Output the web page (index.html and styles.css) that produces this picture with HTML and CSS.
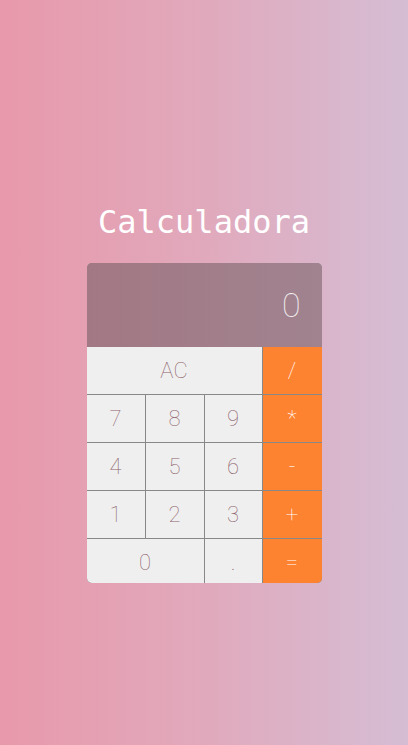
FILE: index.html
```html
<!DOCTYPE html>
<html lang="pt">
<head>
<meta charset="utf-8">
<title>Calculadora</title>
<link rel="stylesheet" href="styles.css">
</head>
<body>
<main class="page">
  <h1 class="title">Calculadora</h1>
  <div class="calc">
    <div class="display">0</div>
    <div class="keys">
      <button class="key span3">AC</button>
      <button class="key op">/</button>
      <button class="key">7</button>
      <button class="key">8</button>
      <button class="key">9</button>
      <button class="key op">*</button>
      <button class="key">4</button>
      <button class="key">5</button>
      <button class="key">6</button>
      <button class="key op">-</button>
      <button class="key">1</button>
      <button class="key">2</button>
      <button class="key">3</button>
      <button class="key op">+</button>
      <button class="key span2">0</button>
      <button class="key">.</button>
      <button class="key op">=</button>
    </div>
  </div>
</main>
</body>
</html>
```

FILE: styles.css
```css
html, body {
  margin: 0;
  padding: 0;
}
body {
  width: 408px;
  height: 745px;
  background: linear-gradient(to right, #e899ab 0%, #e1a9bc 50%, #d5bdd4 100%);
  font-family: "DejaVu Sans Mono", "Liberation Mono", monospace;
  overflow: hidden;
}
.page {
  display: flex;
  flex-direction: column;
  align-items: center;
  padding-top: 202px;
}
.title {
  margin: 0 0 21px;
  font-size: 32px;
  line-height: 40px;
  font-weight: 400;
  color: #ffffff;
}
.calc {
  width: 235px;
  height: 320px;
  border-radius: 5px;
  overflow: hidden;
  display: flex;
  flex-direction: column;
  background: #888888;
}
.display {
  height: 84px;
  flex: none;
  background: linear-gradient(to right, #a27884, #a0838f);
  color: #f4f0f2;
  font-family: "Roboto", "DejaVu Sans", sans-serif;
  font-size: 34px;
  font-weight: 100;
  display: flex;
  align-items: center;
  justify-content: flex-end;
  padding-right: 21px;
}
.keys {
  display: grid;
  grid-template-columns: 58px 58px 57px 59px;
  grid-auto-rows: 47px;
  gap: 1px;
  background: #888888;
}
.key {
  border: 0;
  margin: 0;
  padding: 0;
  background: #efefef;
  color: #8c5f6b;
  font-family: "Roboto", "DejaVu Sans", sans-serif;
  font-size: 22px;
  font-weight: 100;
  display: flex;
  align-items: center;
  justify-content: center;
}
.span2 {
  grid-column: span 2;
}
.span3 {
  grid-column: span 3;
}
.op {
  background: #fd8331;
  color: #ffffff;
}
```
